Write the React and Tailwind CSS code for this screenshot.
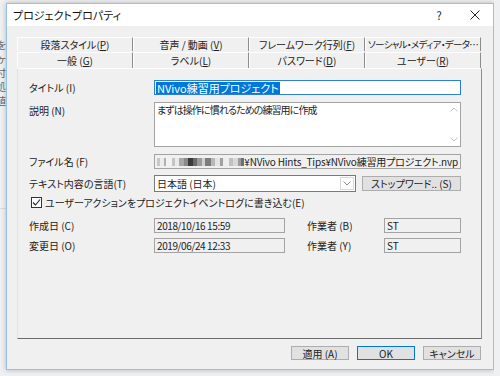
import React from "react";

const U = ({ children }) => <span className="underline underline-offset-[1px]">{children}</span>;

function Backdrop() {
	const marks = ["を", "ヶ", "付", "処", "値"];
	return (
		<div className="flex w-[6px] shrink-0 flex-col overflow-hidden bg-[#eef0f2] pt-[38px]">
			{marks.map((m, i) => (
				<div key={i} className="flex h-[14px] justify-end text-[10px] leading-[14px] text-[#666]">
					<span className="shrink-0">{m}</span>
				</div>
			))}
			<div className="mt-[100px] h-px w-full bg-[#d8dce0]" />
		</div>
	);
}

function TitleBar() {
	return (
		<div className="flex h-[22px] shrink-0 items-center bg-white">
			<div className="flex-1 pl-[6px] text-[11px] text-[#111]">プロジェクトプロパティ</div>
			<div className="flex h-full w-[36px] items-center justify-center text-[11px] text-[#222]">?</div>
			<div className="flex h-full w-[36px] items-center justify-center">
				<svg width="10" height="10" viewBox="0 0 10 10">
					<path d="M0.5 0.5 L9.5 9.5 M9.5 0.5 L0.5 9.5" stroke="#222" strokeWidth="1" />
				</svg>
			</div>
		</div>
	);
}

function Tab({ children, height }) {
	return (
		<div
			className={`flex ${height} items-center justify-center overflow-hidden border-t border-l border-t-[#fdfdfd] border-l-[#fdfdfd] border-r border-r-[#8c8c8c] bg-[#f0f0f0] text-[10px] whitespace-nowrap text-[#222]`}
		>
			{children}
		</div>
	);
}

function Tabs() {
	return (
		<div className="flex w-[464px] flex-col">
			<div className="grid grid-cols-4">
				<Tab height="h-[14px]">段落スタイル(<U>P</U>)</Tab>
				<Tab height="h-[14px]">音声 / 動画 (<U>V</U>)</Tab>
				<Tab height="h-[14px]">フレームワーク行列(<U>F</U>)</Tab>
				<Tab height="h-[14px]">
					<span className="text-[9.5px] tracking-[-0.7px]">ソーシャル・メディア・データ…</span>
				</Tab>
			</div>
			<div className="mt-px grid grid-cols-4">
				<Tab height="h-[16px]">一般 (<U>G</U>)</Tab>
				<Tab height="h-[16px]">ラベル(<U>L</U>)</Tab>
				<Tab height="h-[16px]">パスワード(<U>D</U>)</Tab>
				<Tab height="h-[16px]">ユーザー(<U>R</U>)</Tab>
			</div>
		</div>
	);
}

function Label({ children, className = "" }) {
	return <div className={`w-[125px] shrink-0 text-[10px] whitespace-nowrap text-[#222] ${className}`}>{children}</div>;
}

const mosaic = [
	[3, "#c8c8c8"], [4, "#ececec"], [2, "#b0b0b0"], [6, "#f2f2f2"], [3, "#c4c4c4"], [4, "#eaeaea"],
	[5, "#a8a8a8"], [4, "#8a8a8a"], [5, "#3a3a3a"], [4, "#6a6a6a"], [5, "#9a9a9a"], [3, "#d0d0d0"],
	[6, "#7c7c7c"], [4, "#b8b8b8"], [5, "#e4e4e4"], [3, "#a0a0a0"], [6, "#ededed"], [4, "#c0c0c0"],
	[5, "#d8d8d8"], [3, "#9c9c9c"], [4, "#6e6e6e"], [3, "#b4b4b4"],
];

function Field({ children, className = "" }) {
	return (
		<div
			className={`flex h-[15px] items-center overflow-hidden border border-[#a3a3a3] bg-[#f0f0f0] px-[2px] text-[10px] whitespace-nowrap text-[#222] ${className}`}
		>
			{children}
		</div>
	);
}

function Panel() {
	return (
		<div className="flex h-[271px] w-[465px] flex-col border border-t-[#fdfdfd] border-l-[#e3e3e3] border-r-[#8c8c8c] border-b-[#6b6b6b] bg-[#f0f0f0] pt-[11px] pl-[11px]">
			<div className="flex h-[15px] items-center">
				<Label>タイトル (I)</Label>
				<div className="flex h-[15px] w-[307px] items-center border border-[#2b7fd4] bg-white px-[1px] text-[11px]">
					<span className="bg-[#0078d7] px-px leading-[12px] text-white">NVivo練習用プロジェクト</span>
				</div>
			</div>

			<div className="mt-[7px] flex h-[45px]">
				<Label className="pt-px">説明 (N)</Label>
				<div className="flex w-[307px] border border-[#a3a3a3] bg-white">
					<div className="flex-1 px-[2px] text-[10px] leading-[13px] tracking-[-0.9px] text-[#222]">まずは操作に慣れるための練習用に作成</div>
					<div className="flex w-[12px] flex-col items-center justify-between py-[4px]">
						<svg width="8" height="5" viewBox="0 0 8 5">
							<path d="M0.5 4.5 L4 1 L7.5 4.5" fill="none" stroke="#c4c4c4" strokeWidth="1" />
						</svg>
						<svg width="8" height="5" viewBox="0 0 8 5">
							<path d="M0.5 0.5 L4 4 L7.5 0.5" fill="none" stroke="#c4c4c4" strokeWidth="1" />
						</svg>
					</div>
				</div>
			</div>

			<div className="mt-[7px] flex h-[15px] items-center">
				<Label>ファイル名 (F)</Label>
				<Field className="w-[307px] justify-end">
					<div className="flex h-[8px] min-w-0 flex-1 items-center overflow-hidden">
						{mosaic.map(([w, c], i) => (
							<span key={i} className="h-[8px] shrink-0" style={{ width: w, background: c }} />
						))}
					</div>
					<span className="shrink-0 tracking-[-0.2px]">¥NVivo Hints_Tips¥NVivo練習用プロジェクト.nvp</span>
				</Field>
			</div>

			<div className="mt-[6px] flex h-[17px] items-center">
				<Label>テキスト内容の言語(T)</Label>
				<div className="flex h-[17px] w-[202px] items-center border border-[#7a7a7a] bg-white text-[10px] text-[#222]">
					<div className="flex-1 pl-[2px]">日本語 (日本)</div>
					<div className="mr-px flex h-[13px] w-[14px] items-center justify-center border border-[#d9d9d9]">
						<svg width="8" height="5" viewBox="0 0 8 5">
							<path d="M0.5 0.5 L4 4 L7.5 0.5" fill="none" stroke="#8a8a8a" strokeWidth="1" />
						</svg>
					</div>
				</div>
				<div className="ml-[6px] flex h-[15px] w-[99px] items-center justify-center border border-[#adadad] bg-[#e1e1e1] text-[10px] text-[#222]">
					ストップワード.. (S)
				</div>
			</div>

			<div className="mt-[3px] flex h-[14px] items-center pl-[2px]">
				<div className="flex h-[11px] w-[11px] items-center justify-center border border-[#333] bg-white">
					<svg width="9" height="9" viewBox="0 0 9 9">
						<path d="M1 4.5 L3.5 7 L8 1.5" fill="none" stroke="#222" strokeWidth="1.1" />
					</svg>
				</div>
				<span className="ml-[3px] text-[10px] whitespace-nowrap text-[#222]">ユーザーアクションをプロジェクトイベントログに書き込む(E)</span>
			</div>

			<div className="mt-[9px] flex h-[15px] items-center">
				<Label>作成日 (C)</Label>
				<Field className="w-[131px] tracking-[-0.4px]">2018/10/16 15:59</Field>
				<div className="ml-[22px] w-[77px] text-[10px] text-[#222]">作業者 (B)</div>
				<Field className="w-[77px]">ST</Field>
			</div>

			<div className="mt-[5px] flex h-[15px] items-center">
				<Label>変更日 (O)</Label>
				<Field className="w-[131px] tracking-[-0.4px]">2019/06/24 12:33</Field>
				<div className="ml-[22px] w-[77px] text-[10px] text-[#222]">作業者 (Y)</div>
				<Field className="w-[77px]">ST</Field>
			</div>
		</div>
	);
}

function Buttons() {
	const base = "flex h-[14px] w-[58px] items-center justify-center bg-[#e1e1e1] text-[10px] text-[#222]";
	return (
		<div className="mt-[7px] flex w-[465px] justify-end gap-[8px] pr-px">
			<div className={`${base} border border-[#adadad]`}>適用 (A)</div>
			<div className={`${base} border border-[#0078d7]`}>OK</div>
			<div className={`${base} border border-[#adadad]`}>キャンセル</div>
		</div>
	);
}

export default function App() {
	return (
		<div className="flex h-[376px] w-[500px] overflow-hidden bg-[#eef0f2] font-['Noto_Sans_CJK_JP',sans-serif] [font-feature-settings:'palt']">
			<Backdrop />
			<div className="mt-[3px] flex h-[367px] w-[488px] shrink-0 flex-col border border-[#99c0e6] bg-[#f0f0f0] shadow-[0_0_5px_rgba(0,0,0,0.25)]">
				<TitleBar />
				<div className="flex flex-col px-[10px] pt-[11px]">
					<Tabs />
					<Panel />
					<Buttons />
				</div>
			</div>
			<div className="flex-1 bg-[#eef0f2]" />
		</div>
	);
}
